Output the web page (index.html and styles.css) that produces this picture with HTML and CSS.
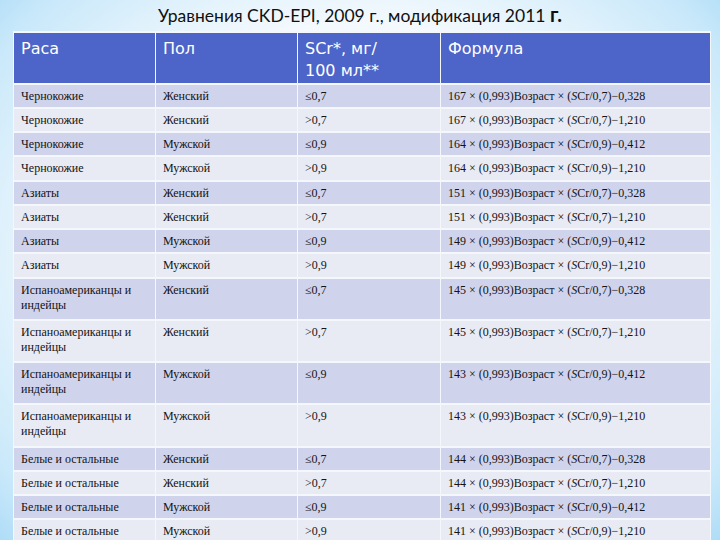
FILE: index.html
```html
<!DOCTYPE html>
<html lang="ru">
<head>
<meta charset="utf-8">
<title>Уравнения CKD-EPI</title>
<link rel="stylesheet" href="styles.css">
</head>
<body>
<div class="page">
  <h1 class="title">Уравнения CKD-EPI, 2009 г., модификация 2011 <span class="big">г.</span></h1>
  <table class="grid">
    <colgroup>
      <col class="c1"><col class="c2"><col class="c3"><col class="c4">
    </colgroup>
    <thead>
      <tr class="head">
        <th>Раса</th><th>Пол</th><th>SCr*, мг/<br>100 мл**</th><th>Формула</th>
      </tr>
    </thead>
    <tbody>
      <tr class="odd"><td>Чернокожие</td><td>Женский</td><td>≤0,7</td><td>167 × (0,993)Возраст × (<i>S</i>Cr/0,7)−0,328</td></tr>
      <tr class="even"><td>Чернокожие</td><td>Женский</td><td>&gt;0,7</td><td>167 × (0,993)Возраст × (<i>S</i>Cr/0,7)−1,210</td></tr>
      <tr class="odd"><td>Чернокожие</td><td>Мужской</td><td>≤0,9</td><td>164 × (0,993)Возраст × (<i>S</i>Cr/0,9)−0,412</td></tr>
      <tr class="even"><td>Чернокожие</td><td>Мужской</td><td>&gt;0,9</td><td>164 × (0,993)Возраст × (<i>S</i>Cr/0,9)−1,210</td></tr>
      <tr class="odd"><td>Азиаты</td><td>Женский</td><td>≤0,7</td><td>151 × (0,993)Возраст × (<i>S</i>Cr/0,7)−0,328</td></tr>
      <tr class="even"><td>Азиаты</td><td>Женский</td><td>&gt;0,7</td><td>151 × (0,993)Возраст × (<i>S</i>Cr/0,7)−1,210</td></tr>
      <tr class="odd"><td>Азиаты</td><td>Мужской</td><td>≤0,9</td><td>149 × (0,993)Возраст × (<i>S</i>Cr/0,9)−0,412</td></tr>
      <tr class="even"><td>Азиаты</td><td>Мужской</td><td>&gt;0,9</td><td>149 × (0,993)Возраст × (<i>S</i>Cr/0,9)−1,210</td></tr>
      <tr class="odd tall"><td>Испаноамериканцы и индейцы</td><td>Женский</td><td>≤0,7</td><td>145 × (0,993)Возраст × (<i>S</i>Cr/0,7)−0,328</td></tr>
      <tr class="even tall"><td>Испаноамериканцы и индейцы</td><td>Женский</td><td>&gt;0,7</td><td>145 × (0,993)Возраст × (<i>S</i>Cr/0,7)−1,210</td></tr>
      <tr class="odd tall"><td>Испаноамериканцы и индейцы</td><td>Мужской</td><td>≤0,9</td><td>143 × (0,993)Возраст × (<i>S</i>Cr/0,9)−0,412</td></tr>
      <tr class="even tall"><td>Испаноамериканцы и индейцы</td><td>Мужской</td><td>&gt;0,9</td><td>143 × (0,993)Возраст × (<i>S</i>Cr/0,9)−1,210</td></tr>
      <tr class="odd"><td>Белые и остальные</td><td>Женский</td><td>≤0,7</td><td>144 × (0,993)Возраст × (<i>S</i>Cr/0,7)−0,328</td></tr>
      <tr class="even"><td>Белые и остальные</td><td>Женский</td><td>&gt;0,7</td><td>144 × (0,993)Возраст × (<i>S</i>Cr/0,7)−1,210</td></tr>
      <tr class="odd"><td>Белые и остальные</td><td>Мужской</td><td>≤0,9</td><td>141 × (0,993)Возраст × (<i>S</i>Cr/0,9)−0,412</td></tr>
      <tr class="even"><td>Белые и остальные</td><td>Мужской</td><td>&gt;0,9</td><td>141 × (0,993)Возраст × (<i>S</i>Cr/0,9)−1,210</td></tr>
    </tbody>
  </table>
</div>
</body>
</html>
```
FILE: styles.css
```css
html, body {
  margin: 0;
  padding: 0;
}

.page {
  width: 720px;
  height: 540px;
  overflow: hidden;
  background: radial-gradient(ellipse 72% 80% at 50% 48%, #ffffff 0%, #f3f9fd 55%, #c8e8fa 85%, #a2d7f6 100%);
}

.title {
  margin: 0;
  height: 31px;
  padding-top: 3px;
  box-sizing: border-box;
  text-align: center;
  font-family: "Lato", "Liberation Sans", sans-serif;
  font-weight: normal;
  font-size: 17.5px;
  line-height: 22px;
  color: #111111;
}

.title .big {
  font-weight: bold;
  font-size: 20px;
}

.grid {
  margin-left: 13px;
  width: 698px;
  table-layout: fixed;
  border-collapse: separate;
  border-spacing: 1px 2px;
  background: #f4f7fb;
}

.c1 { width: 141px; }
.c2 { width: 141px; }
.c3 { width: 142px; }
.c4 { width: 269px; }

.head { height: 49.5px; }

.head th {
  background: #4d64c9;
  color: #ffffff;
  font-family: "DejaVu Sans", "Liberation Sans", sans-serif;
  font-weight: normal;
  font-size: 16px;
  line-height: 22px;
  text-align: left;
  vertical-align: top;
  padding: 5px 7px 0;
}

tbody tr { height: 22.25px; }
tbody tr.tall { height: 40.25px; }

tbody td {
  font-family: "Liberation Serif", "Times New Roman", serif;
  font-size: 12px;
  line-height: 15px;
  color: #141414;
  vertical-align: top;
  padding: 4px 7px 0;
}

tbody td i { font-style: italic; }

.odd td { background: #d0d3ec; }
.even td { background: #e8eaf4; }
```
